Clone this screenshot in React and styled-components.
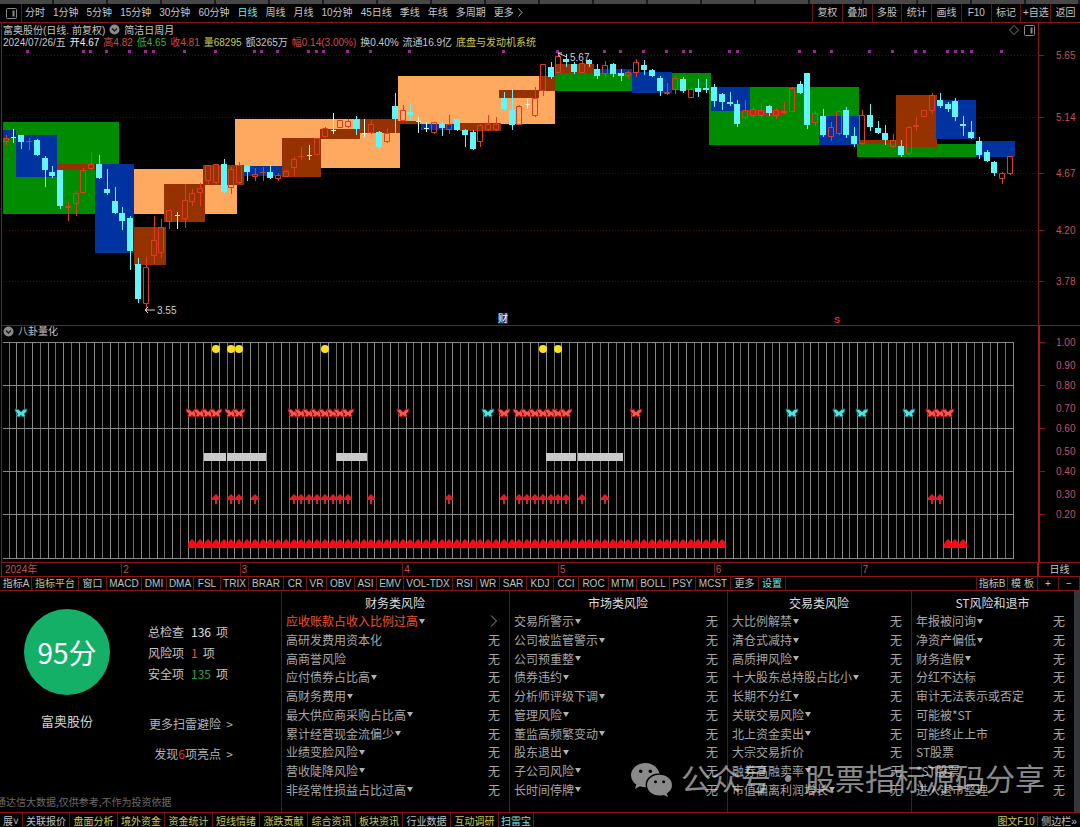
import React from 'react';
import styled, { createGlobalStyle } from 'styled-components';

const GlobalStyle = createGlobalStyle`
  * {
    box-sizing: border-box;
  }

  body {
    margin: 0;
    background: #000;
    color: #c4c4c4;
    font-family: "Liberation Sans", "Noto Sans CJK SC", sans-serif;
    font-size: 10px;
    overflow: hidden;
  }

  button {
    margin: 0;
    padding: 0;
    border: none;
    background: none;
    color: inherit;
    font: inherit;
    white-space: nowrap;
    cursor: pointer;
  }

  svg {
    display: block;
  }
`;

// Styled Components
const Page = styled.div`
  position: relative;
  display: flex;
  flex-direction: column;
`;

const WindowEdge = styled.div`
  height: 4px;
  background: repeating-linear-gradient(90deg, #474747 0 52px, #1c1c1c 52px 54px);
`;

const Toolbar = styled.nav`
  display: flex;
  align-items: stretch;
  height: 19px;
  border-bottom: 1px solid #8c1616;
`;

const ToolbarIcon = styled.button`
  display: flex;
  align-items: center;
  width: 22px;
  padding-left: 6px;
  border-right: 1px solid #6e1212;
`;

const PeriodList = styled.div`
  display: flex;
  flex: 1;
  gap: 8px;
  padding-left: 3px;
`;

const Period = styled.button`
  line-height: 18px;
  color: ${(props) => (props.$active ? '#5ff0f0' : '#c8c8c8')};
`;

const MoreArrow = styled.svg`
  display: inline-block;
  margin-left: 4px;
  vertical-align: -1px;
`;

const ActionList = styled.div`
  display: grid;
  grid-template-columns: repeat(9, 1fr);
  width: 268px;
`;

const Action = styled.button`
  border-left: 1px solid #6e1212;
  line-height: 18px;
`;

const Panel = styled.section`
  margin-left: 1px;
  border-left: 1px solid #8c1616;
`;

const PriceHeader = styled.header`
  display: flex;
  height: 25px;
`;

const HeaderText = styled.div`
  flex: 1;
  padding-left: 1px;
`;

const HeaderLine = styled.div`
  display: flex;
  align-items: center;
  gap: 4px;
  height: 12px;
  white-space: pre;
`;

const Quote = styled.span`
  color: ${(props) => props.$color || '#c8c8c8'};
`;

const HeaderTools = styled.div`
  display: flex;
  gap: 5px;
  padding: 2px 3px 0 0;
`;

const AxisGap = styled.div`
  width: 42px;
  border-left: 1px solid #8c1616;
`;

const Chart = styled.svg`
  width: 100%;
  height: auto;
  font-family: "Liberation Sans", "Noto Sans CJK SC", sans-serif;
  font-size: 10px;
`;

const SignalHeader = styled.header`
  display: flex;
  height: 11px;
  line-height: 11px;
`;

const SignalTitle = styled.div`
  display: flex;
  flex: 1;
  align-items: center;
  gap: 4px;
  padding-left: 1px;
`;

const SignalAxisGap = styled.div`
  width: 42px;
  border-left: 2px solid #a81818;
`;

const DateRow = styled.div`
  display: flex;
  height: 14px;
  border-top: 1px solid #8c1616;
  color: #c85050;
  line-height: 13px;
`;

const Month = styled.span`
  flex: ${(props) => props.$span} 1 0;
  padding-left: ${(props) => (props.$first ? 3 : 1)}px;
  border-left: ${(props) => (props.$first ? 'none' : '1px solid #6e1212')};
`;

const PeriodCell = styled.span`
  width: 43px;
  border-left: 2px solid #a81818;
  color: #c8c8c8;
  text-align: center;
`;

const TabBar = styled.nav`
  display: flex;
  height: ${(props) => props.$height}px;
  padding-left: ${(props) => props.$indent || 0}px;
  border-top: 1px solid #8c1616;
  border-bottom: ${(props) => (props.$closed ? '1px solid #8c1616' : 'none')};
  overflow: hidden;
`;

const Tab = styled.button`
  width: ${(props) => props.$width}px;
  border-right: ${(props) => (props.$plain ? 'none' : '1px solid #6e1212')};
  color: ${(props) => props.$color || '#c0c0c0'};
  line-height: ${(props) => props.$line || 13}px;
  text-align: center;
`;

const TabSpacer = styled.div`
  flex: 1;
  border-right: ${(props) => (props.$edge ? '1px solid #6e1212' : 'none')};
`;

const RiskPanel = styled.section`
  display: grid;
  grid-template-columns: 281fr 228fr 218fr 184fr 163fr 6px;
  height: 221px;
  font-family: "Noto Sans CJK SC", sans-serif;
  font-size: 12px;
`;

const Summary = styled.div`
  display: flex;
  flex-direction: column;
  justify-content: space-between;
  min-width: 0;
`;

const SummaryBody = styled.div`
  display: flex;
`;

const ScoreBox = styled.div`
  display: flex;
  flex-direction: column;
  align-items: center;
  gap: 16px;
  width: 134px;
  padding-top: 18px;
`;

const Score = styled.div`
  display: flex;
  align-items: center;
  justify-content: center;
  width: 86px;
  height: 86px;
  border-radius: 50%;
  background: #14b068;
  color: #fff;
  font-size: 28px;
`;

const StockName = styled.div`
  color: #d0d0d0;
  font-size: 13px;
  line-height: 20px;
`;

const Facts = styled.div`
  display: flex;
  flex-direction: column;
  padding: 30px 0 0 14px;
`;

const Fact = styled.div`
  display: flex;
  gap: 7px;
  line-height: 21px;
`;

const FactValue = styled.span`
  margin-right: -2px;
  color: ${(props) => props.$color};
`;

const FactLinks = styled.div`
  display: flex;
  flex-direction: column;
  align-items: flex-end;
  width: 85px;
  margin-top: 25px;
`;

const FactLink = styled.a`
  color: #b4b4b4;
  line-height: 30px;
  text-decoration: none;
  white-space: pre;
`;

const Found = styled.span`
  color: #e03030;
`;

const Disclaimer = styled.div`
  overflow: hidden;
  color: #6c6c6c;
  font-size: 10px;
  line-height: 20px;
  text-indent: -4px;
  white-space: nowrap;
`;

const RiskColumn = styled.div`
  min-width: 0;
  padding: 2px 9px 0 4px;
  border-left: 1px solid #2a2a2a;
`;

const RiskTitle = styled.h2`
  margin: 0 -4px 0 0;
  color: #dcdcdc;
  font-size: 12px;
  font-weight: 400;
  line-height: 19px;
  text-align: center;
`;

const RiskList = styled.ul`
  display: flex;
  flex-direction: column;
  height: 187px;
  margin: 0;
  padding: 0;
  list-style: none;
`;

const RiskItem = styled.li`
  display: flex;
  flex: 1;
  align-items: center;
  justify-content: space-between;
  line-height: 18px;
  color: #a6a6a6;
`;

const RiskName = styled.button`
  display: flex;
  align-items: center;
  gap: 1px;
  color: ${(props) => (props.$alert ? '#f4502c' : '#a6a6a6')};
`;

const Caret = styled.i`
  border: 3px solid transparent;
  border-top: 5px solid #b0b0b0;
  border-bottom: none;
`;

const Scrollbar = styled.div`
  background: #34363a;
`;

const Watermark = styled.div`
  position: absolute;
  right: 35px;
  bottom: 22px;
  display: flex;
  align-items: center;
  gap: 9px;
  color: #d2d2d2;
  font-family: "Noto Sans CJK SC", sans-serif;
  font-size: 30px;
  line-height: 44px;
  opacity: 0.66;
  pointer-events: none;
`;

const WatermarkText = styled.div`
  padding-bottom: 6px;
`;

const WatermarkDot = styled.span`
  display: inline-block;
  width: 34px;
  text-align: center;
`;

const RED = '#d84848';
const GREEN = '#3cb43c';
const YELLOW = '#c8c850';
const CYAN = '#62f6fa';

const periods = ['分时', '1分钟', '5分钟', '15分钟', '30分钟', '60分钟', '日线', '周线', '月线', '10分钟', '45日线', '季线', '年线', '多周期'];

const actions = ['复权', '叠加', '多股', '统计', '画线', 'F10', '标记', '+自选', '返回'];

const quotes = [
  ['2024/07/26/五'],
  ['开4.67', '#f0f0f0'],
  ['高4.82', RED],
  ['低4.65', GREEN],
  ['收4.81', RED],
  ['量68295', YELLOW],
  ['额3265万'],
  ['幅0.14(3.00%)', RED],
  ['换0.40%'],
  ['流通16.9亿'],
  ['底盘与发动机系统', YELLOW],
];

// x, y, right, bottom, kind
const zones = [
  [3, 122, 119, 214, 'green'],
  [3, 130, 16, 138, 'blue'],
  [16, 135, 57, 177, 'blue'],
  [57, 164, 95, 170, 'brown'],
  [134, 169, 237, 214, 'orange'],
  [95, 164, 134, 253, 'blue'],
  [134, 227, 166, 265, 'brown'],
  [164, 184, 205, 222, 'brown'],
  [235, 119, 400, 168, 'orange'],
  [203, 165, 244, 185, 'brown'],
  [244, 166, 282, 176, 'blue'],
  [282, 138, 321, 177, 'brown'],
  [320, 129, 360, 139, 'brown'],
  [360, 119, 400, 133, 'brown'],
  [398, 76, 555, 124, 'orange'],
  [398, 121, 420, 124, 'brown'],
  [421, 124, 460, 130, 'blue'],
  [460, 123, 501, 131, 'brown'],
  [499, 90, 539, 98, 'brown'],
  [539, 76, 555, 91, 'brown'],
  [555, 69, 632, 91, 'green'],
  [555, 64, 594, 73, 'brown'],
  [594, 69, 632, 73, 'blue'],
  [632, 72, 672, 93, 'blue'],
  [672, 73, 711, 90, 'green'],
  [709, 87, 859, 145, 'green'],
  [711, 87, 750, 111, 'blue'],
  [748, 110, 784, 116, 'red'],
  [819, 116, 859, 145, 'blue'],
  [857, 144, 976, 157, 'green'],
  [859, 140, 897, 144, 'brown'],
  [896, 95, 937, 147, 'brown'],
  [936, 100, 976, 139, 'blue'],
  [976, 141, 1015, 157, 'blue'],
];

const zoneColors = { green: '#008c00', blue: '#0032a0', brown: '#963200', orange: '#ffa860', red: '#c02a0c' };

// u = rising, d = falling, w = white cross; then high, body top, body bottom, low
const candles = [
  ['u', 135, 138, 142, 145], ['w', 129, 137, 138, 143], ['d', 135, 135, 142, 149], ['u', 138, 141, 142, 150],
  ['d', 139, 140, 155, 156], ['d', 156, 158, 170, 187], ['d', 166, 172, 176, 178], ['d', 170, 170, 206, 209],
  ['u', 202, 206, 208, 221], ['u', 191, 193, 204, 216], ['u', 168, 170, 193, 194], ['u', 152, 164, 169, 170],
  ['d', 155, 164, 178, 179], ['d', 169, 189, 193, 195], ['d', 187, 201, 213, 214], ['d', 207, 213, 221, 230],
  ['d', 216, 218, 251, 270], ['d', 258, 264, 299, 303], ['u', 257, 267, 304, 311], ['u', 216, 240, 256, 264],
  ['u', 219, 227, 253, 258], ['u', 210, 210, 222, 229], ['w', 212, 215, 216, 229], ['u', 184, 200, 219, 228],
  ['u', 189, 193, 202, 206], ['u', 183, 188, 193, 206], ['u', 165, 165, 181, 184], ['u', 164, 164, 183, 184],
  ['d', 159, 164, 192, 193], ['u', 167, 169, 188, 194], ['u', 162, 165, 183, 184], ['d', 165, 166, 172, 181],
  ['u', 168, 174, 177, 181], ['u', 167, 172, 173, 181], ['d', 165, 172, 178, 179], ['u', 173, 175, 179, 181],
  ['u', 170, 171, 177, 177], ['u', 157, 159, 168, 176], ['u', 147, 156, 157, 160], ['w', 145, 155, 156, 160],
  ['u', 138, 138, 155, 155], ['u', 127, 128, 137, 138], ['w', 113, 130, 131, 134], ['u', 120, 120, 128, 128],
  ['u', 119, 121, 127, 128], ['d', 116, 120, 129, 135], ['w', 119, 133, 134, 137], ['u', 120, 124, 133, 134],
  ['d', 131, 132, 147, 150], ['u', 128, 133, 142, 143], ['d', 93, 106, 119, 133], ['u', 105, 110, 121, 122],
  ['d', 104, 112, 115, 121], ['w', 117, 121, 122, 133], ['w', 122, 128, 129, 132], ['u', 122, 122, 133, 134],
  ['d', 122, 124, 128, 136], ['u', 115, 124, 130, 134], ['d', 118, 119, 130, 131], ['d', 129, 130, 135, 147],
  ['d', 130, 132, 149, 150], ['u', 124, 125, 142, 147], ['u', 115, 124, 130, 131], ['u', 117, 124, 130, 131],
  ['d', 92, 98, 109, 111], ['d', 89, 110, 125, 130], ['u', 105, 106, 125, 125], ['w', 99, 104, 105, 109],
  ['u', 87, 98, 116, 117], ['u', 64, 64, 91, 96], ['d', 62, 67, 77, 79], ['u', 55, 56, 73, 73],
  ['d', 54, 59, 62, 67], ['d', 62, 64, 72, 74], ['u', 61, 63, 73, 73], ['d', 59, 60, 64, 67],
  ['d', 64, 69, 76, 79], ['u', 61, 65, 74, 78], ['d', 63, 64, 74, 77], ['d', 69, 73, 76, 81],
  ['u', 71, 72, 76, 79], ['u', 59, 62, 73, 77], ['d', 60, 65, 70, 75], ['d', 69, 70, 76, 77],
  ['d', 76, 78, 91, 96], ['u', 83, 92, 94, 95], ['u', 76, 78, 90, 94], ['d', 77, 79, 91, 93],
  ['u', 88, 89, 98, 98], ['d', 79, 88, 92, 97], ['d', 79, 88, 90, 93], ['d', 84, 87, 101, 107],
  ['d', 93, 94, 102, 110], ['d', 92, 102, 104, 106], ['d', 100, 104, 124, 127], ['u', 100, 110, 118, 119],
  ['u', 107, 109, 116, 118], ['u', 103, 110, 116, 118], ['d', 105, 106, 113, 116], ['u', 108, 110, 116, 119],
  ['u', 102, 111, 113, 114], ['u', 87, 88, 112, 112], ['d', 81, 84, 93, 94], ['d', 73, 73, 125, 129],
  ['u', 111, 113, 123, 126], ['d', 109, 116, 135, 137], ['u', 122, 127, 137, 141], ['u', 110, 111, 134, 135],
  ['d', 107, 110, 135, 138], ['d', 127, 136, 144, 147], ['u', 110, 115, 144, 145], ['d', 104, 115, 127, 131],
  ['d', 121, 128, 133, 134], ['d', 125, 133, 140, 145], ['u', 134, 140, 147, 148], ['d', 140, 146, 155, 157],
  ['u', 126, 127, 154, 155], ['u', 117, 125, 127, 131], ['u', 110, 110, 117, 117], ['u', 93, 95, 111, 114],
  ['d', 93, 100, 106, 108], ['d', 102, 104, 109, 112], ['d', 98, 101, 117, 121], ['d', 116, 124, 126, 136],
  ['d', 121, 132, 138, 139], ['d', 137, 141, 155, 159], ['d', 150, 152, 161, 162], ['d', 161, 162, 173, 176],
  ['u', 172, 173, 179, 184], ['u', 156, 156, 174, 175],
];

const newsDots = [
  27, 83, 90, 106, 129, 145, 153, 184, 215, 254, 261, 277, 308, 316, 323, 347, 370, 409, 503, 557, 604, 620,
  643, 666, 683, 690, 729, 737, 799, 814, 831, 869, 892, 915, 924, 947, 955, 962, 971, 1001,
];

const priceLevels = [[55, '5.65'], [117, '5.14'], [173, '4.67'], [230, '4.20'], [281, '3.78']];

const signalLevels = [
  [342, '1.00'], [365, '0.90'], [385, '0.80'], [408, '0.70'], [428, '0.60'],
  [451, '0.50'], [471, '0.40'], [494, '0.30'], [514, '0.20'],
];

const gridLines = [342, 385, 428, 471, 514, 558];

const range = (from, to) => Array.from({ length: to - from + 1 }, (_, i) => from + i);

const suns = [27, 29, 30, 41, 69, 71];
const redButterflies = [...range(24, 27), 29, 30, ...range(37, 44), 51, 64, ...range(66, 72), 81, 119, 120, 121];
const cyanButterflies = [2, 62, 101, 107, 110, 116];
const blocks = [[204, 226], [227, 266], [336, 367], [546, 576], [578, 623]];
const arrows = [27, 29, 30, 32, ...range(37, 44), 47, 57, 64, ...range(66, 72), 74, 77, 119, 120];
const triangles = [...range(24, 92), 121, 122, 123];

const months = [['2024年', 118], ['2', 118], ['3', 163], ['4', 156], ['5', 156], ['6', 147], ['7', 177]];

const indicators = [
  ['指标A', 31], ['指标平台', 47, '#b4c880'], ['窗口', 28], ['MACD', 35], ['DMI', 25], ['DMA', 27], ['FSL', 27],
  ['TRIX', 28], ['BRAR', 35], ['CR', 23], ['VR', 20], ['OBV', 28], ['ASI', 22], ['EMV', 27], ['VOL-TDX', 49],
  ['RSI', 24], ['WR', 23], ['SAR', 27], ['KDJ', 27], ['CCI', 25], ['ROC', 30], ['MTM', 28], ['BOLL', 33],
  ['PSY', 26], ['MCST', 35], ['更多', 28], ['设置', 27, '#6ce8e8'],
];

const indicatorTools = [['指标B', 31], ['模 板', 30], ['+', 21], ['−', 21]];

const infoTabs = [
  ['展˅', 23], ['关联报价', 47], ['盘面分析', 48, YELLOW], ['境外资金', 47, YELLOW], ['资金统计', 48, YELLOW],
  ['短线情绪', 47, YELLOW], ['涨跌贡献', 48, YELLOW], ['综合资讯', 48, YELLOW], ['板块资讯', 47, YELLOW],
  ['行业数据', 48], ['互动调研', 48, YELLOW], ['扫雷宝', 35, '#6ce8e8'],
];

const risks = [
  {
    title: '财务类风险',
    items: ['应收账款占收入比例过高*', '高研发费用资本化', '高商誉风险', '应付债券占比高*', '高财务费用*', '最大供应商采购占比高*', '累计经营现金流偏少*', '业绩变脸风险*', '营收陡降风险*', '非经常性损益占比过高*'],
    alert: 0,
  },
  {
    title: '市场类风险',
    items: ['交易所警示*', '公司被监管警示*', '公司预重整*', '债券违约*', '分析师评级下调*', '管理风险*', '董监高频繁变动*', '股东退出*', '子公司风险*', '长时间停牌*'],
  },
  {
    title: '交易类风险',
    items: ['大比例解禁*', '清仓式减持*', '高质押风险*', '十大股东总持股占比小*', '长期不分红*', '关联交易风险*', '北上资金卖出*', '大宗交易折价', '融券高融卖率*', '市值偏离利润增长*'],
  },
  {
    title: 'ST风险和退市',
    items: ['年报被问询*', '净资产偏低*', '财务造假*', '分红不达标', '审计无法表示或否定', '可能被*ST', '可能终止上市', 'ST股票', '*ST股票', '进入退市整理'],
  },
];

const barX = (index) => Math.round(5.6 + index * 7.785);

const PanelIcon = () => (
  <svg width="11" height="11" viewBox="0 0 11 11" fill="none" stroke="#8a8a8a">
    <rect x="0.5" y="0.5" width="10" height="10" rx="1" />
    <path d="M7.5 2.5v6" strokeWidth="2" />
  </svg>
);

const DropIcon = () => (
  <svg width="11" height="11" viewBox="0 0 11 11">
    <circle cx="5.5" cy="5.5" r="5" fill="#8c8c8c" />
    <path d="M3 4.5l2.5 2.5L8 4.5" fill="none" stroke="#1c1c1c" strokeWidth="1.4" />
  </svg>
);

const Candle = ({ index, data }) => {
  const [kind, high, top, bottom, low] = data;
  const x = barX(index);

  if (kind === 'u') {
    return (
      <path
        d={`M${x + 0.5} ${high}V${top}M${x + 0.5} ${bottom}V${low}M${x - 2.5} ${top + 0.5}h5V${bottom - 0.5}h-5Z`}
        fill="none"
        stroke="#dc3c28"
      />
    );
  }

  if (kind === 'w') {
    return <path d={`M${x + 0.5} ${high}V${low}M${x - 2} ${top + 0.5}h5`} stroke="#c8fff0" />;
  }

  return (
    <g fill={CYAN}>
      <rect x={x} y={high} width="1" height={low - high} />
      <rect x={x - 3} y={top} width="6" height={bottom - top} />
    </g>
  );
};

const PriceChart = () => (
  <Chart viewBox="2 48 1078 278" role="img" aria-label="日线K线图">
    {priceLevels.map(([y, label]) => (
      <g key={label}>
        <path d={`M3 ${y + 0.5}H1038`} stroke="#4c0c0c" strokeDasharray="1 2" />
        <path d={`M1038 ${y + 0.5}h6`} stroke="#8c1616" />
        <text x="1056" y={y + 4} fill="#c85050">{label}</text>
      </g>
    ))}
    <path d="M1038.5 48V326M2 325.5H1080" stroke="#8c1616" />
    {newsDots.map((x) => (
      <rect key={x} x={x - 1} y="50" width="3" height="3" fill="#9c249c" />
    ))}
    {zones.map(([x, y, right, bottom, kind]) => (
      <rect key={`${x}-${y}`} x={x} y={y} width={right - x} height={bottom - y} fill={zoneColors[kind]} />
    ))}
    {candles.map((data, index) => (
      <Candle key={index} index={index} data={data} />
    ))}
    <path d="M558 53l9 4M558 53l4 0M558 53l2 4M145 310h10M145 310l3-3M145 310l3 3" fill="none" stroke="#d0d0d0" />
    <text x="570" y="61" fill="#d0d0d0">5.67</text>
    <text x="157" y="314" fill="#d0d0d0">3.55</text>
    <rect x="498" y="313" width="10" height="11" fill="#0a3c78" />
    <text x="498" y="322" fill="#fff">财</text>
    <text x="834" y="323" fill="#f02828" fontSize="9" fontWeight="bold">S</text>
  </Chart>
);

const butterflyPath = 'M-6-4C-3-4-1-3 0-1C1-3 3-4 6-4C6-2 5 0 3 1C5 2 4 3 3 4C1 4 0 3 0 2C0 3-1 4-3 4C-4 3-5 2-3 1C-5 0-6-2-6-4Z';

const SignalChart = () => (
  <Chart viewBox="2 337 1078 225" role="img" aria-label="八卦量化">
    {range(0, 129).map((index) => (
      <path key={index} d={`M${barX(index) + 3.5} 342V558`} stroke={index % 2 ? '#8a8a8a' : '#6c6c6c'} />
    ))}
    {gridLines.map((y) => (
      <path key={y} d={`M3 ${y + 0.5}H1014`} stroke="#868a86" />
    ))}
    <path d="M1039 337V562" stroke="#a81818" strokeWidth="2" />
    {signalLevels.map(([y, label], index) => (
      <g key={label}>
        {index % 2 === 0 && <path d={`M1040 ${y + 0.5}h5`} stroke="#8c1616" />}
        <text x="1056" y={y + 4} fill="#c85064">{label}</text>
      </g>
    ))}
    {suns.map((index) => (
      <circle key={index} cx={barX(index)} cy="349" r="4" fill="#fce020" />
    ))}
    {redButterflies.map((index) => (
      <path key={index} d={butterflyPath} transform={`translate(${barX(index)} 413)`} fill="#f4584c" stroke="#a00c0c" />
    ))}
    {cyanButterflies.map((index) => (
      <path key={index} d={butterflyPath} transform={`translate(${barX(index)} 413)`} fill="#4ce4e4" stroke="#106868" />
    ))}
    {blocks.map(([x, right]) => (
      <rect key={x} x={x} y="453" width={right - x} height="8" fill="#cacaca" />
    ))}
    {arrows.map((index) => (
      <path key={index} d="M0-5L4-1V1H1V5H-1V1H-4V-1Z" transform={`translate(${barX(index)} 499)`} fill="#e01c24" />
    ))}
    {triangles.map((index) => (
      <path key={index} d="M0-5L2-3L4 0V4H-4V0L-2-3Z" transform={`translate(${barX(index)} 544)`} fill="#f40c14" />
    ))}
  </Chart>
);

const RiskTable = ({ title, items, alert }) => (
  <RiskColumn>
    <RiskTitle>{title}</RiskTitle>
    <RiskList>
      {items.map((item, index) => (
        <RiskItem key={item}>
          <RiskName $alert={index === alert}>
            {item.replace(/\*$/, '')}
            {item.endsWith('*') && <Caret />}
          </RiskName>
          {index === alert ? (
            <svg width="12" height="12" viewBox="0 0 12 12" fill="none" stroke="#9a9a9a">
              <path d="M3 0.5L8.5 6L3 11.5" />
            </svg>
          ) : (
            <span>无</span>
          )}
        </RiskItem>
      ))}
    </RiskList>
  </RiskColumn>
);

const App = () => {
  return (
    <Page>
      <GlobalStyle />
      <WindowEdge />
      <Toolbar>
        <ToolbarIcon aria-label="侧栏">
          <PanelIcon />
        </ToolbarIcon>
        <PeriodList>
          {periods.map((period) => (
            <Period key={period} $active={period === '日线'}>{period}</Period>
          ))}
          <Period>
            更多
            <MoreArrow width="5" height="9" viewBox="0 0 5 9" fill="none" stroke="#b0b0b0">
              <path d="M0.5 0.5L4 4.5L0.5 8.5" />
            </MoreArrow>
          </Period>
        </PeriodList>
        <ActionList>
          {actions.map((action) => (
            <Action key={action}>{action}</Action>
          ))}
        </ActionList>
      </Toolbar>

      <Panel>
        <PriceHeader>
          <HeaderText>
            <HeaderLine>
              <span>富奥股份(日线. 前复权)</span>
              <DropIcon />
              <span>简洁日周月</span>
            </HeaderLine>
            <HeaderLine>
              {quotes.map(([text, color]) => (
                <Quote key={text} $color={color}>{text}</Quote>
              ))}
            </HeaderLine>
          </HeaderText>
          <HeaderTools>
            <svg width="10" height="10" viewBox="0 0 10 10" fill="none" stroke="#7c7c7c">
              <path d="M5 0.5L9.5 5L5 9.5L0.5 5Z" />
            </svg>
            <PanelIcon />
          </HeaderTools>
          <AxisGap />
        </PriceHeader>
        <PriceChart />
      </Panel>

      <Panel>
        <SignalHeader>
          <SignalTitle>
            <DropIcon />
            <span>八卦量化</span>
          </SignalTitle>
          <SignalAxisGap />
        </SignalHeader>
        <SignalChart />
        <DateRow>
          {months.map(([label, span], index) => (
            <Month key={label} $span={span} $first={index === 0}>{label}</Month>
          ))}
          <PeriodCell>日线</PeriodCell>
        </DateRow>
      </Panel>

      <TabBar $height={15} $indent={1} $closed>
        {indicators.map(([label, width, color]) => (
          <Tab key={label} $width={width} $color={color}>{label}</Tab>
        ))}
        <TabSpacer $edge />
        {indicatorTools.map(([label, width]) => (
          <Tab key={label} $width={width}>{label}</Tab>
        ))}
      </TabBar>

      <RiskPanel>
        <Summary>
          <SummaryBody>
            <ScoreBox>
              <Score>95分</Score>
              <StockName>富奥股份</StockName>
            </ScoreBox>
            <Facts>
              <Fact>总检查<FactValue $color="#e0e0e0">136</FactValue>项</Fact>
              <Fact>风险项<FactValue $color="#f04830">1</FactValue>项</Fact>
              <Fact>安全项<FactValue $color="#28a050">135</FactValue>项</Fact>
              <FactLinks>
                <FactLink href="#risk">更多扫雷避险  &gt;</FactLink>
                <FactLink href="#highlights">发现<Found>6</Found>项亮点  &gt;</FactLink>
              </FactLinks>
            </Facts>
          </SummaryBody>
          <Disclaimer>通达信大数据,仅供参考,不作为投资依据</Disclaimer>
        </Summary>
        {risks.map((risk) => (
          <RiskTable key={risk.title} {...risk} />
        ))}
        <Scrollbar />
      </RiskPanel>

      <TabBar $height={15}>
        {infoTabs.map(([label, width, color]) => (
          <Tab key={label} $width={width} $color={color} $line={17}>{label}</Tab>
        ))}
        <TabSpacer />
        <Tab $width={43} $color={YELLOW} $line={17}>图文F10</Tab>
        <Tab $width={42} $line={17} $plain>侧边栏»</Tab>
      </TabBar>

      <Watermark>
        <svg width="41" height="34" viewBox="0 0 41 34" fill="currentColor">
          <path
            fillRule="evenodd"
            d="M14.500 0C6.500 0 0 5.500 0 12.200C0 16 2 19.300 5.300 21.600L4 26L9 23.300C11 24 12.800 24.300 15 24.200C13 16.500 20 10 28.500 10.500C27 4.500 21.500 0 14.500 0ZM9.700 6.500a1.800 1.800 0 1 1 0 3.600a1.800 1.800 0 1 1 0-3.600ZM19.300 6.500a1.800 1.800 0 1 1 0 3.600a1.800 1.800 0 1 1 0-3.600Z"
          />
          <path
            fillRule="evenodd"
            d="M28.500 11.800C21.600 11.800 16 16.400 16 22.200C16 28 21.600 32.500 28.500 32.500C30 32.500 31.400 32.300 32.700 31.900L37 34L35.900 30.400C39 28.500 41 25.500 41 22.200C41 16.400 35.400 11.800 28.500 11.800ZM24.500 17.300a1.500 1.500 0 1 1 0 3a1.500 1.500 0 1 1 0-3ZM32.600 17.300a1.500 1.500 0 1 1 0 3a1.500 1.500 0 1 1 0-3Z"
          />
        </svg>
        <WatermarkText>公众号<WatermarkDot>·</WatermarkDot>股票指标源码分享</WatermarkText>
      </Watermark>
    </Page>
  );
};

export default App;
